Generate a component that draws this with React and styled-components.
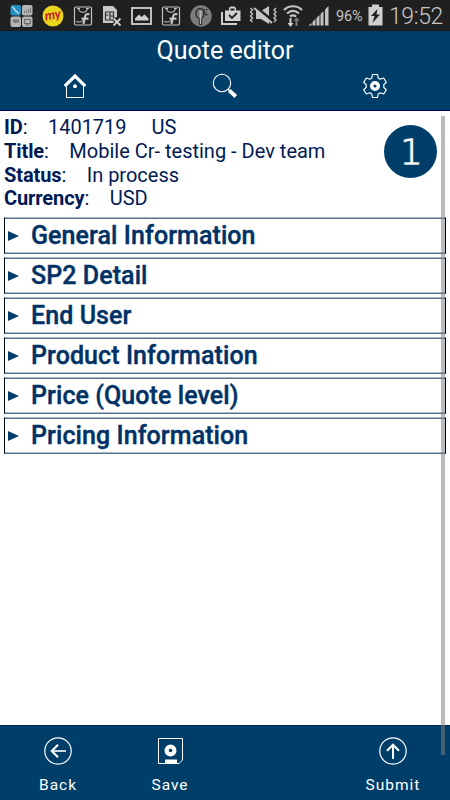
import styled, { createGlobalStyle } from "styled-components";

const GlobalStyle = createGlobalStyle`
  * {
    box-sizing: border-box;
  }
  body {
    margin: 0;
    font-family: Roboto, sans-serif;
  }
`;

const Screen = styled.div`
  position: relative;
  display: flex;
  flex-direction: column;
  width: 450px;
  height: 800px;
  overflow: hidden;
  background: #fff;
`;

const StatusBar = styled.div`
  display: flex;
  align-items: center;
  flex: none;
  height: 31px;
  padding-left: 10px;
  background: #202020;
  border-bottom: 1px solid #1c1c18;

  svg {
    display: block;
    flex: none;
    overflow: visible;
  }
`;

const Notifications = styled.div`
  display: flex;
  align-items: center;
  width: 238px;
  padding-top: 1px;
  gap: 9px;
`;

const SystemIcons = styled.div`
  display: flex;
  align-items: center;
  gap: 5px;
`;

const Battery = styled.span`
  width: 27px;
  margin-left: 2px;
  padding-top: 2px;
  color: #c4c4c4;
  font-size: 14.5px;
  letter-spacing: -0.1px;
  white-space: nowrap;
`;

const Clock = styled.span`
  margin-left: 1px;
  padding-top: 2px;
  color: #c8c8c8;
  font-size: 23px;
  font-weight: 300;
  letter-spacing: -0.4px;
`;

const Header = styled.header`
  flex: none;
  height: 80px;
  background: #003e6a;
  border-bottom: 1px solid #00005c;
`;

const PageTitle = styled.h1`
  margin: 0;
  padding-top: 3px;
  color: #fff;
  font-size: 25px;
  font-weight: 400;
  line-height: 33px;
  text-align: center;
`;

const Nav = styled.nav`
  display: grid;
  grid-template-columns: repeat(3, 1fr);
  justify-items: center;
  padding-top: 6px;
`;

const IconButton = styled.button`
  display: block;
  padding: 0;
  border: none;
  background: none;

  svg {
    display: block;
  }
`;

const Content = styled.main`
  flex: 1;
  padding: 4px 4px 0;
`;

const Summary = styled.div`
  display: flex;
  justify-content: space-between;
  height: 102px;
  padding-right: 9px;
`;

const Field = styled.div`
  display: flex;
  height: 23.8px;
  color: #001a56;
  font-size: 20px;
  line-height: 24px;
  white-space: pre;
`;

const Label = styled.span`
  letter-spacing: -0.1px;

  b {
    font-weight: 700;
  }
`;

const Value = styled.span`
  margin-left: ${(p) => p.$gap || "20.5px"};
`;

const Badge = styled.div`
  width: 53px;
  height: 53px;
  margin-top: 10px;
  border-radius: 50%;
  background: #003e6a;
`;

const Sections = styled.div`
  display: flex;
  flex-direction: column;
  gap: 3px;
`;

const Section = styled.div`
  display: flex;
  align-items: center;
  height: 37px;
  padding-left: 3px;
  border: 1px solid;
  border-color: #aeb7c3 #00003c #52708f #000814;
  box-shadow: inset 0 1px #52708f, inset 0 -1px #aeb7c3;
  color: #003266;
`;

const Arrow = styled.span`
  width: 0;
  height: 0;
  margin-top: 1px;
  border-top: 5.5px solid transparent;
  border-bottom: 5.5px solid transparent;
  border-left: 11px solid #003e6a;
`;

const SectionTitle = styled.h2`
  margin: 0 0 0 12px;
  font-size: 25px;
  font-weight: 500;
  line-height: 30px;
  letter-spacing: 0.08px;
  -webkit-text-stroke: 0.4px #003266;
`;

const Footer = styled.footer`
  display: grid;
  grid-template-columns: 112px 112px 111px 112px;
  justify-content: center;
  flex: none;
  height: 75px;
  padding: 11px 0 0 1px;
  background: #003e6a;
  border-top: 1px solid #002450;
`;

const FooterButton = styled.button`
  grid-column: ${(p) => p.$column};
  display: flex;
  flex-direction: column;
  align-items: center;
  gap: 11px;
  padding: 0;
  border: none;
  background: none;
  color: #fff;
  font-family: inherit;
  font-size: 15.5px;
  line-height: 18px;
  letter-spacing: 1px;
`;

const ScrollThumb = styled.div`
  position: absolute;
  top: 116px;
  left: 441px;
  width: 4px;
  height: 639px;
  background: rgba(128, 128, 128, 0.53);
`;

const sections = [
  "General Information",
  "SP2 Detail",
  "End User",
  "Product Information",
  "Price (Quote level)",
  "Pricing Information",
];

const GridIcon = () => (
  <svg width="23" height="24" viewBox="0.5 0 23 24">
    <rect x="1" y="1" width="10.5" height="10.5" rx="2" fill="#258fc0" />
    <path d="M3 3l2 2 1 2 2 1 1 2" stroke="#d5edf5" strokeWidth="1.2" fill="none" />
    <rect x="12.5" y="1" width="10.5" height="10.5" rx="2" fill="#b5b5b5" />
    <path d="M15 9V7M17 9V6M19 9V5M21 9V4" stroke="#777" />
    <rect x="1" y="12.5" width="10.5" height="10.5" rx="2" fill="#b5b5b5" />
    <path d="M3.5 15.5h6v3h-3l-1 1.5v-1.5h-2z" fill="#777" />
    <rect x="12.5" y="12.5" width="10.5" height="10.5" rx="2" fill="#b5b5b5" />
    <path d="M15 15.5h6v4h-6zM16 21h4" stroke="#666" fill="none" />
  </svg>
);

const MyIcon = () => (
  <svg width="22" height="22" viewBox="0 0 22 22">
    <circle cx="11" cy="11" r="10.5" fill="#e9d51b" />
    <text
      x="11"
      y="14"
      fill="#c51a28"
      fontSize="13"
      fontFamily="Lato"
      fontWeight="700"
      fontStyle="italic"
      textAnchor="middle"
      transform="rotate(-10 11 11)"
    >
      my
    </text>
  </svg>
);

const BagIcon = () => (
  <svg width="20" height="20" viewBox="0 0 20 20" fill="none" stroke="#c4c4c4">
    <rect x="1.5" y="1" width="17" height="18" rx="1.5" strokeWidth="1.2" />
    <path d="M5.5 2.5c1 5 8 5 9 0M4 2.5h3M13 2.5h3" strokeWidth="1.2" />
    <path d="M16.500 8.300c-3-.8-4 .2-4.500 2.700l-1.500 7M8.500 12.700h7" strokeWidth="2.200" />
    <path d="M3 15.5c3 1 6 .5 7-1" strokeWidth="1" />
  </svg>
);

const SimIcon = () => (
  <svg width="20" height="22" viewBox="0 0 20 22">
    <path d="M1 1h10l4 4v7l-3 2v4H1z" fill="#c8c8c8" />
    <path d="M3.5 7h8v8h-8zM3.5 10h3M8 7v8M8 11h3" stroke="#333" strokeWidth="1.2" fill="none" />
    <path d="M11.5 13.5l7 7M18.5 13.5l-7 7" stroke="#202020" strokeWidth="4" />
    <path d="M11.5 13.5l7 7M18.5 13.5l-7 7" stroke="#d0d0d0" strokeWidth="1.8" />
  </svg>
);

const PhotoIcon = () => (
  <svg width="21" height="18" viewBox="0 0 21 18">
    <rect x="1" y="1" width="19" height="16" fill="none" stroke="#d0d0d0" strokeWidth="1.8" />
    <path d="M4 13.5v-2l4-4 2.5 2.5 3-2.5 4 4v2z" fill="#d0d0d0" />
  </svg>
);

const LeafIcon = () => (
  <svg width="22" height="22" viewBox="0 0 22 22">
    <circle cx="11" cy="11" r="10.7" fill="#7c7c7c" />
    <ellipse cx="10" cy="8.5" rx="4" ry="5" stroke="#2b2b2b" strokeWidth="1.4" fill="none" />
    <path d="M9.3 13v6.5h2.4V13" stroke="#2b2b2b" strokeWidth="1" fill="#b8b8b8" />
    <path d="M10.5 6v8" stroke="#b8b8b8" strokeWidth="1.6" />
    <path d="M13.5 8l2-1.5M15 9.5h2.5M13.5 5.5l1-1.5M16 5l1.5-.5" stroke="#222" strokeWidth="1.3" />
  </svg>
);

const ClipboardIcon = () => (
  <svg width="20" height="19" viewBox="0 0 20 19">
    <path d="M1 6v12h15" fill="none" stroke="#d0d0d0" strokeWidth="2" />
    <path d="M4 4.5h4V2L9.500.5h4L15 2v2.500h4.500V15H4zM9.500 4.500h4V2.500h-4z" fill="#d0d0d0" fillRule="evenodd" />
    <path d="M8 9l3 3 5-5" fill="none" stroke="#202020" strokeWidth="1.8" />
  </svg>
);

const MuteIcon = () => (
  <svg width="30" height="20" viewBox="0 0 30 20">
    <path
      d="M2.5 3l2 2-2 2 2 2-2 2 2 2-2 2 2 2M28 3l-2 2 2 2-2 2 2 2-2 2 2 2-2 2"
      fill="none"
      stroke="#c4c4c4"
      strokeWidth="1.4"
    />
    <path d="M8 6h5l8-5v18l-8-5H8z" fill="#c4c4c4" />
    <path d="M8 2l17 14" stroke="#202020" strokeWidth="2.5" />
    <path d="M6 3l18 15" stroke="#c4c4c4" strokeWidth="1.8" />
  </svg>
);

const WifiIcon = () => (
  <svg width="20" height="23" viewBox="0 0 20 23">
    <g fill="none" stroke="#c4c4c4" strokeWidth="2.2">
      <path d="M1 6c5-5 13-5 18 0M4 9.5c4-3.5 8-3.5 12 0M7 12.500c2-1.500 4-1.500 6 0" />
    </g>
    <path d="M6.5 14h2v5h2l-3 4-3-4h2z" fill="#d0d0d0" />
    <path d="M12.5 22h2v-5h2l-3-4-3 4h2z" fill="#777" />
  </svg>
);

const SignalIcon = () => (
  <svg width="21" height="21" viewBox="0 0 21 21" fill="#c4c4c4">
    <path d="M.5 20.5l3-2.5v2.5zM4.5 17l3-3v6.5h-3zM8.5 13l3-3v10.5h-3zM12.5 9l3-3v14.5h-3zM17 4.5L20.5 1v19.500H17z" />
  </svg>
);

const BatteryIcon = () => (
  <svg width="15" height="22" viewBox="0 0 15 22">
    <path d="M4 .5h7V3h3.5v18.5H.5V3H4z" fill="#d0d0d0" />
    <path d="M9.5 5L3 12h3.500l-2 7 7.500-8.500H8.500z" fill="#202020" />
  </svg>
);

const HomeIcon = () => (
  <svg width="24" height="26" viewBox="0 0 24 26" fill="none" stroke="#fff">
    <path d="M1.8 13.2L12 3l10.2 10.2" strokeWidth="3.2" />
    <path d="M3.5 14v10.5h17V14" strokeWidth="1" />
    <circle cx="12" cy="13.3" r="2" fill="#fff" stroke="none" />
  </svg>
);

const SearchIcon = () => (
  <svg width="26" height="26" viewBox="0 0 26 26" fill="none" stroke="#fff">
    <circle cx="10" cy="10" r="8.7" strokeWidth="1.1" />
    <path d="M15.8 16l2.5 2.3" strokeWidth="1.4" />
    <path d="M17.3 17.5l6.5 6" strokeWidth="3.8" />
  </svg>
);

const GearIcon = () => (
  <svg width="26" height="26" viewBox="0 0 26 26" fill="none" stroke="#fff">
    <path
      d="M10.5 1.5h5l.7 3.500 2 1.200 3.500-1.200 2.600 4.300-2.500 2.300v2.800l2.500 2.300-2.600 4.300-3.500-1.200-2 1.200-.7 3.500h-5L9.800 21l-2-1.200L4.300 21l-2.600-4.300 2.500-2.300v-2.800L1.700 9.300 4.300 5l3.500 1.200 2-1.200z"
      strokeWidth="1.2"
      strokeLinejoin="round"
    />
    <circle cx="13" cy="13" r="3.3" strokeWidth="3.4" />
  </svg>
);

const BackIcon = () => (
  <svg width="28" height="28" viewBox="0 0 28 28" fill="none" stroke="#fff">
    <circle cx="14" cy="14" r="13.2" strokeWidth="1.2" />
    <path d="M22 14H8" strokeWidth="1.6" />
    <path d="M14 7.8L7.8 14l6.200 6.200" strokeWidth="2.1" />
  </svg>
);

const SaveIcon = () => (
  <svg width="28" height="28" viewBox="0 0 28 28" fill="none" stroke="#fff">
    <path d="M2.5 1.5h24v21.5l-3.5 3.5H2.5z" strokeWidth="1" />
    <circle cx="14.500" cy="13.5" r="3.9" strokeWidth="4.2" />
    <path d="M9 24.5h12" strokeWidth="4" />
  </svg>
);

const SubmitIcon = () => (
  <svg width="28" height="28" viewBox="0 0 28 28" fill="none" stroke="#fff">
    <circle cx="14" cy="14" r="13.2" strokeWidth="1.2" />
    <path d="M14 22V8" strokeWidth="2" />
    <path d="M8 13.8l6-6 6 6" strokeWidth="2.1" />
  </svg>
);

function App() {
  return (
    <Screen>
      <GlobalStyle />
      <StatusBar>
        <Notifications>
          <GridIcon />
          <MyIcon />
          <BagIcon />
          <SimIcon />
          <PhotoIcon />
          <BagIcon />
          <LeafIcon />
          <ClipboardIcon />
        </Notifications>
        <SystemIcons>
          <MuteIcon />
          <WifiIcon />
          <SignalIcon />
          <Battery>96%</Battery>
          <BatteryIcon />
          <Clock>19:52</Clock>
        </SystemIcons>
      </StatusBar>
      <Header>
        <PageTitle>Quote editor</PageTitle>
        <Nav>
          <IconButton aria-label="Home">
            <HomeIcon />
          </IconButton>
          <IconButton aria-label="Search">
            <SearchIcon />
          </IconButton>
          <IconButton aria-label="Settings">
            <GearIcon />
          </IconButton>
        </Nav>
      </Header>
      <Content>
        <Summary>
          <div>
            <Field>
              <Label><b>ID</b>:</Label>
              <Value>1401719</Value>
              <Value $gap="25px">US</Value>
            </Field>
            <Field>
              <Label><b>Title</b>:</Label>
              <Value>Mobile Cr- testing - Dev team</Value>
            </Field>
            <Field>
              <Label><b>Status</b>:</Label>
              <Value>In process</Value>
            </Field>
            <Field>
              <Label><b>Currency</b>:</Label>
              <Value>USD</Value>
            </Field>
          </div>
          <Badge>
            <svg width="53" height="53" viewBox="0 0 53 53">
              <text
                x="27"
                y="39.5"
                fill="#fff"
                fontSize="37"
                fontFamily="DejaVu Sans"
                textAnchor="middle"
                stroke="#003e6a"
                strokeWidth="0.7"
              >
                1
              </text>
            </svg>
          </Badge>
        </Summary>
        <Sections>
          {sections.map((title) => (
            <Section key={title}>
              <Arrow />
              <SectionTitle>{title}</SectionTitle>
            </Section>
          ))}
        </Sections>
      </Content>
      <Footer>
        <FooterButton $column={1}>
          <BackIcon />
          Back
        </FooterButton>
        <FooterButton $column={2}>
          <SaveIcon />
          Save
        </FooterButton>
        <FooterButton $column={4}>
          <SubmitIcon />
          Submit
        </FooterButton>
      </Footer>
      <ScrollThumb />
    </Screen>
  );
}

export default App;
